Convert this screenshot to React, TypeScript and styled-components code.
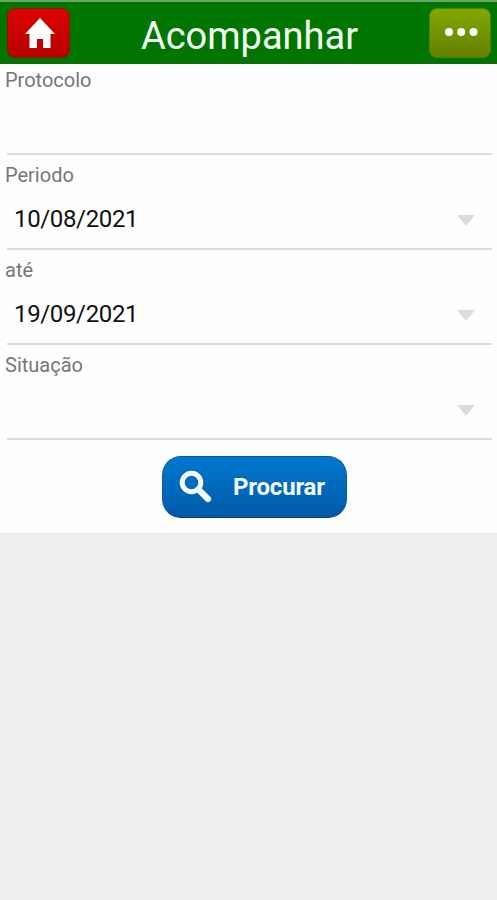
import React from "react";
import styled, { createGlobalStyle } from "styled-components";

const GlobalStyle = createGlobalStyle`
  * { box-sizing: border-box; }
  body { margin: 0; background: #eeeeee; font-family: Roboto, "Liberation Sans", sans-serif; }
`;

const Screen = styled.div`
  width: 100%;
  height: 900px;
  background: #eeeeee;
  overflow: hidden;
`;

const Header = styled.header`
  display: flex;
  align-items: center;
  justify-content: space-between;
  height: 64px;
  padding: 0 6px 0 7px;
  border-top: 2px solid #68a568;
  border-bottom: 1px solid #126a12;
  background: #007600;
`;

const Title = styled.h1`
  margin: 0;
  padding-top: 6px;
  color: #f6fff3;
  font-size: 38px;
  font-weight: 400;
  line-height: 44px;
`;

const HeaderButton = styled.button<{ $tone: "red" | "olive" }>`
  display: flex;
  align-items: center;
  justify-content: center;
  width: ${(p) => (p.$tone === "red" ? 63 : 62)}px;
  height: 50px;
  padding: ${(p) => (p.$tone === "red" ? "0 0 0 2px" : "0 0 2px 2px")};
  border: 1px solid ${(p) => (p.$tone === "red" ? "#8d1400" : "#4d8700")};
  border-radius: 8px;
  background: ${(p) =>
    p.$tone === "red"
      ? "linear-gradient(#dc0505, #b80000)"
      : "linear-gradient(#82a800, #648000)"};
`;

const Form = styled.main`
  height: 469px;
  background: #fefefe;
`;

const Field = styled.div`
  height: 95px;
  padding: 8px 5px 0 5px;

  &:first-child {
    height: 91px;
    padding-top: 4px;
  }
`;

const FieldBody = styled.div`
  display: flex;
  flex-direction: column;
  height: 100%;
`;

const Label = styled.label`
  color: #777777;
  font-size: 20px;
  line-height: 24px;
`;

const Value = styled.div`
  display: flex;
  flex: 1;
  align-items: center;
  justify-content: space-between;
  margin-left: 2px;
  padding: 3px 17px 0 7px;
  border-bottom: 2px solid #dddddd;
  color: #111111;
  font-size: 24px;
  line-height: 28px;
  letter-spacing: -0.35px;
`;

const Arrow = styled.svg`
  display: block;
  margin-top: 3px;
`;

const Actions = styled.div`
  display: flex;
  justify-content: center;
  padding: 16px 0 0 12px;
`;

const SearchButton = styled.button`
  display: flex;
  align-items: center;
  width: 185px;
  height: 62px;
  padding: 0 0 1px 16px;
  border: 1px solid #075ca5;
  border-bottom-color: #003b80;
  border-radius: 19px;
  background: linear-gradient(#0078cf, #005aa7);
  color: #f5fbff;
  font-family: inherit;
  font-size: 24px;
  font-weight: 700;
  letter-spacing: -0.2px;
`;

const ButtonText = styled.span`
  margin-left: 20px;
`;

const fields = [
  { label: "Protocolo", value: "", picker: false },
  { label: "Periodo", value: "10/08/2021", picker: true },
  { label: "até", value: "19/09/2021", picker: true },
  { label: "Situação", value: "", picker: true },
];

export default function App() {
  return (
    <Screen>
      <GlobalStyle />
      <Header>
        <HeaderButton $tone="red" aria-label="Início">
          <svg width="32" height="32" viewBox="0 0 32 32" fill="#fff">
            <path d="M16 1 31 17H26.5V31H19V22H13V31H5.5V17H1Z" />
          </svg>
        </HeaderButton>
        <Title>Acompanhar</Title>
        <HeaderButton $tone="olive" aria-label="Mais opções">
          <svg width="34" height="10" viewBox="0 0 34 10" fill="#fff">
            <circle cx="5" cy="5" r="4" />
            <circle cx="17.2" cy="5" r="4" />
            <circle cx="29.5" cy="5" r="4" />
          </svg>
        </HeaderButton>
      </Header>
      <Form>
        {fields.map((f) => (
          <Field key={f.label}>
            <FieldBody>
              <Label>{f.label}</Label>
              <Value>
                <span>{f.value}</span>
                {f.picker && (
                  <Arrow width="18" height="11" viewBox="0 0 18 11" fill="#dcdcdc">
                    <path d="M0 0H18L9 11Z" />
                  </Arrow>
                )}
              </Value>
            </FieldBody>
          </Field>
        ))}
        <Actions>
          <SearchButton>
            <svg width="34" height="34" viewBox="0 0 34 34" fill="none" stroke="#f5fbff">
              <circle cx="12.5" cy="12.5" r="9.3" strokeWidth="5" />
              <path d="m19.5 19.5 9.5 9.5" strokeWidth="6.2" strokeLinecap="round" />
            </svg>
            <ButtonText>Procurar</ButtonText>
          </SearchButton>
        </Actions>
      </Form>
    </Screen>
  );
}
